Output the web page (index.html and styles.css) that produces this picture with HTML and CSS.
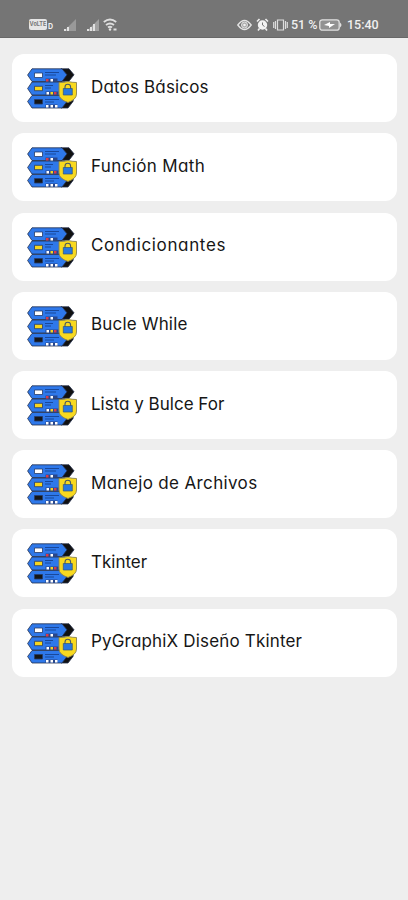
FILE: index.html
```
<!DOCTYPE html>
<html lang="es">
<head>
<meta charset="utf-8">
<title>Temas</title>
<link rel="stylesheet" href="styles.css">
</head>
<body>
<svg class="defs" aria-hidden="true">
  <symbol id="server" viewBox="0 0 50 41">
    <g stroke="#24304d" stroke-width=".8" stroke-linejoin="round">
      <path fill="#111" d="M34 .8h8l5 6-5 6.400h-8z"/>
      <path fill="#2e78ea" d="M5 .8h30l5 6-5 6.700H5L.6 7z"/>
      <path fill="#2e78ea" d="M5 14h33v13H5L.6 20.500z"/>
      <path fill="#111" d="M34 27.500h13l-1 6-5 6.500h-7z"/>
      <path fill="#2e78ea" d="M5 27.500h30l5 6-5 6.500H5L.6 33.500z"/>
    </g>
    <g stroke="#174391" stroke-width=".9">
      <path d="M18 4.500h14M18 7h11M18 17.500h8M18 20h6M18 31.500h14M18 34h9"/>
    </g>
    <g stroke="#263b67" stroke-width=".8">
      <path fill="#fff" d="M7.500 5h8v4.500h-8z"/>
      <path fill="#f7d51e" d="M7.500 18.300h8v4.400h-8z"/>
      <path fill="#161616" d="M7.500 31.500h8V36h-8z"/>
    </g>
    <path fill="#29468a" d="M18.500 10.500h12v3h-12zM18.500 23.500h13v3.300h-13zM18.500 36.500h12v3.300h-12z"/>
    <path fill="#d93a4b" d="M19 11h2.500v2.500H19zM27 24h2.500v2.500H27z"/>
    <path fill="#fff" d="M23.500 11H26v2.500h-2.500zM19.500 24H22v2.500h-2.500zM19 37h2.500v2.500H19zM23.500 37H26v2.500h-2.500zM28 37h2.500v2.500H28z"/>
    <path fill="#f7d51e" d="M23.500 24H26v2.500h-2.500z"/>
    <path fill="#f8d91f" stroke="#8a824f" stroke-width=".9" d="M32 14.500q5 0 9-1 4 1 8.500 1V26q0 5.500-8.500 8.500Q32 31.500 32 26z"/>
    <path fill="none" stroke="#4b5960" stroke-width="1.100" d="M38 21v-2a2.800 2.800 0 0 1 5.600 0v2"/>
    <path fill="#2878df" stroke="#345477" stroke-width=".7" d="M36.300 20.500h9V27h-9z"/>
  </symbol>
</svg>
<header class="status">
  <div class="left">
    <span class="volte">VoLTE</span><span class="sim">D</span>
    <svg class="signal" viewBox="0 0 14 13"><path fill="#999" d="M13 1v12H1z"/><path fill="#e2e2e2" d="M1 11h2v2H1zM4 9h2v4H4z"/></svg>
    <svg class="signal" viewBox="0 0 14 13"><path fill="#a2a2a2" d="M13 1v12H1z"/><path fill="#e2e2e2" d="M1 11h2v2H1zM4 9h2v4H4zM7 6h2v7H7z"/></svg>
    <svg class="wifi" viewBox="0 0 15 13"><g fill="none" stroke="#dedede" stroke-width="1.900"><path d="M.8 4Q7 -1 13.200 4M3 7q4-3 8 0M5 9.500q2-1.500 4 0"/></g><circle cx="7" cy="11.500" r="1.200" fill="#e5e5e5"/><path stroke="#ddd" stroke-width="2" d="M10.500 11.500h3"/></svg>
  </div>
  <div class="right">
    <svg class="eye" viewBox="0 0 15 12"><path fill="none" stroke="#e3e3e3" stroke-width="1.300" d="M.8 6Q7.500-3 14.200 6 7.500 15 .8 6z"/><circle cx="7.500" cy="6" r="3" fill="#aaa" stroke="#e3e3e3"/><circle cx="7.500" cy="6" r="1.300" fill="#eee"/></svg>
    <svg class="alarm" viewBox="0 0 13 13"><circle cx="6.500" cy="7" r="4.700" fill="#f2f2f2"/><path fill="none" stroke="#eee" stroke-width="1.600" d="M1 3.500 3.500 1M9.500 1 12 3.500M3.500 10.500 2 12.500M9.500 10.500l1.500 2"/><path fill="none" stroke="#777" d="M6.500 4.500V7l2 1.500"/></svg>
    <svg class="vibrate" viewBox="0 0 15 12"><path fill="none" stroke="#ddd" stroke-width="1.200" d="M4.500 1h6v10h-6zM2.500 2v8M12.500 2v8M.7 3v6M14.300 3v6"/></svg>
    <span class="level">51 %</span>
    <svg class="battery" viewBox="0 0 23 12"><rect x=".8" y=".8" width="19.400" height="10.400" rx="2.500" fill="#929292" stroke="#e0e0e0" stroke-width="1.300"/><path fill="#e0e0e0" d="M21 3.500q3 2.500 0 5z"/><path fill="#fff" d="m5 6 6-3v2h5l-6 4V7z"/></svg>
    <span class="clock">15:40</span>
  </div>
</header>
<main class="list">
  <article class="card"><svg class="icon"><use href="#server"/></svg><span class="label">Datos Básicos</span></article>
  <article class="card"><svg class="icon"><use href="#server"/></svg><span class="label wide">Función Math</span></article>
  <article class="card"><svg class="icon"><use href="#server"/></svg><span class="label wider">Condicionantes</span></article>
  <article class="card"><svg class="icon"><use href="#server"/></svg><span class="label">Bucle While</span></article>
  <article class="card"><svg class="icon"><use href="#server"/></svg><span class="label tight">Lista y Bulce For</span></article>
  <article class="card"><svg class="icon"><use href="#server"/></svg><span class="label wide">Manejo de Archivos</span></article>
  <article class="card"><svg class="icon"><use href="#server"/></svg><span class="label tight">Tkinter</span></article>
  <article class="card"><svg class="icon"><use href="#server"/></svg><span class="label">PyGraphiX Diseño Tkinter</span></article>
</main>
</body>
</html>
```
FILE: styles.css
```
* { box-sizing: border-box; }
body { margin: 0; min-height: 900px; background: #eee; font-family: Inter, "Liberation Sans", sans-serif; }
svg { display: block; flex: none; }
.defs { width: 0; height: 0; }
.status { height: 38px; padding: 12px 29px 0 29px; display: flex; justify-content: space-between; background: #757575; border-bottom: 1px solid #686868; color: #f0f0f0; }
.left, .right { height: 25px; display: flex; align-items: center; }
.volte { width: 18px; height: 11px; border-radius: 2px; background: #e6e6e6; color: #777; font-size: 5.5px; font-weight: 700; line-height: 11px; text-align: center; }
.sim { width: 6px; margin-left: 1px; padding-top: 4px; font-size: 7px; font-weight: 700; }
.signal { width: 14px; height: 13px; margin-left: 9px; }
.wifi { width: 15px; height: 13px; margin-left: 3px; }
.right { font-family: Roboto, sans-serif; font-size: 12.5px; font-weight: 500; }
.eye { width: 15px; height: 12px; }
.alarm { width: 13px; height: 13px; margin-left: 4px; }
.vibrate { width: 15px; height: 12px; margin-left: 4px; }
.level { width: 27px; margin-left: 3px; white-space: nowrap; }
.battery { width: 23px; height: 12px; margin-left: 1px; }
.clock { width: 32px; margin-left: 5px; }
.list { display: grid; gap: 11.2px; padding: 16.3px 11px 0 12px; }
.card { height: 68px; display: flex; align-items: center; border-radius: 12px; background: #fff; padding-left: 14.5px; }
.icon { width: 50px; height: 41px; margin-top: 1px; }
.label { margin: 0 0 3px 14.5px; color: #161616; font-size: 17px; line-height: 24px; letter-spacing: .17px; white-space: nowrap; font-feature-settings: "cv11"; }
.wide { letter-spacing: .36px; }
.wider { letter-spacing: .65px; }
.tight { letter-spacing: 0; }
```
